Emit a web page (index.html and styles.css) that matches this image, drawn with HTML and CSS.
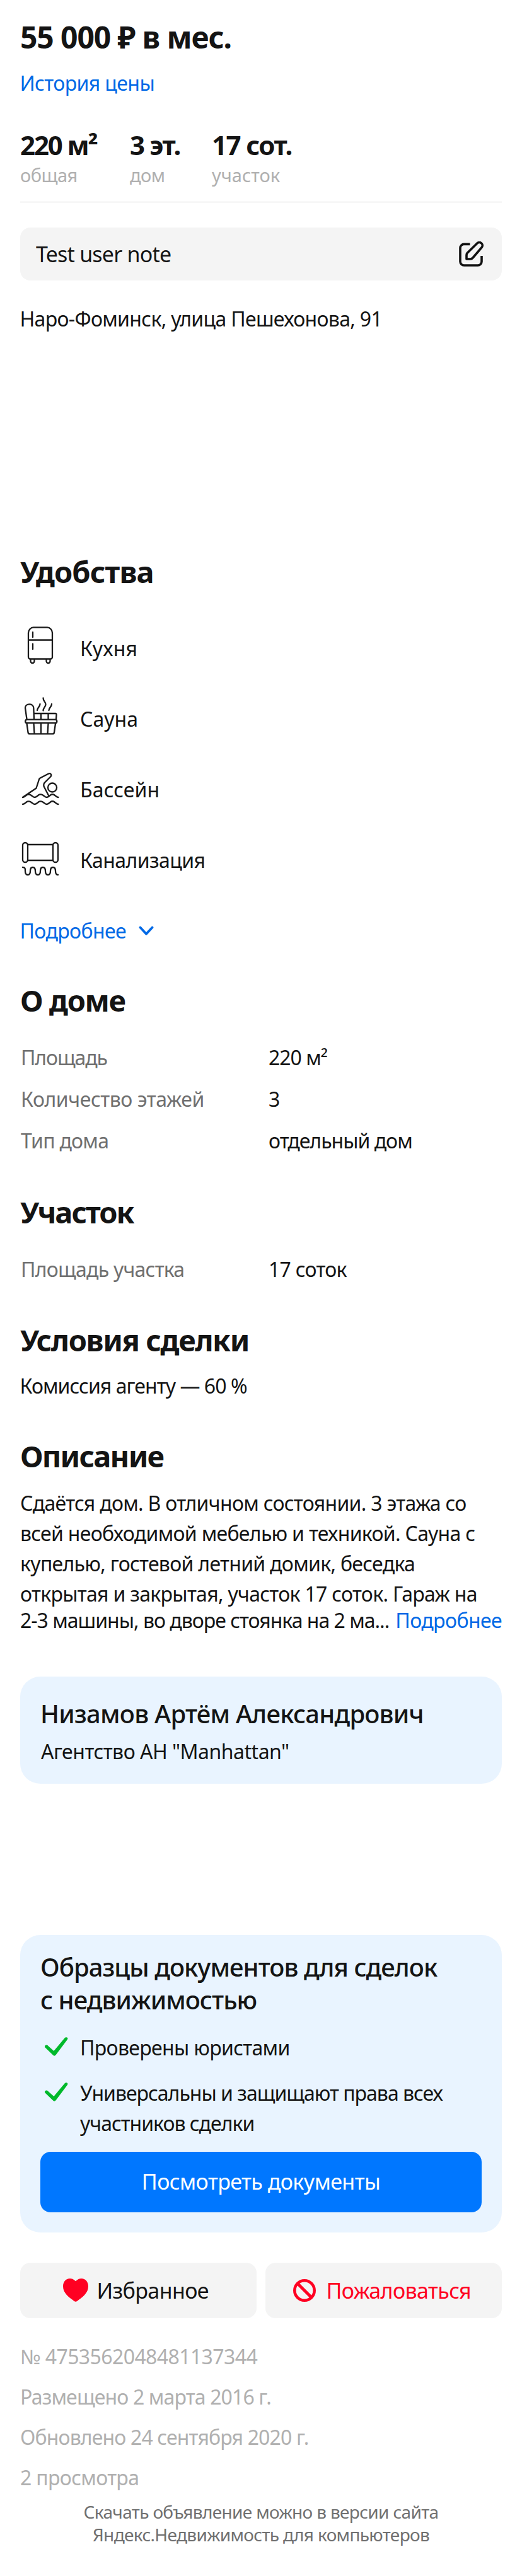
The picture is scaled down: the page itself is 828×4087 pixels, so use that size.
FILE: index.html
```html
<!DOCTYPE html>
<html lang="ru">
<head>
<meta charset="utf-8">
<title>Дом 220 м²</title>
<link rel="stylesheet" href="styles.css">
</head>
<body>
<main class="page">
  <h1 class="price">55 000 ₽ в мес.</h1>
  <a class="link history pull">История цены</a>

  <div class="stats">
    <div class="stat stat-area"><div class="stat-value t-area">220 м²</div><div class="stat-label">общая</div></div>
    <div class="stat stat-floors"><div class="stat-value t-floors">3 эт.</div><div class="stat-label">дом</div></div>
    <div class="stat"><div class="stat-value t-lot">17 сот.</div><div class="stat-label t-0">участок</div></div>
  </div>

  <div class="note">
    <span class="note-text">Test user note</span>
    <svg class="note-icon" viewBox="0 0 40 40" fill="none" stroke="#111" stroke-width="3.6" stroke-linejoin="round">
      <path d="M17.5 4.4H8a6 6 0 0 0-6 6V32a6 6 0 0 0 6 6h22a6 6 0 0 0 6-6v-9"/>
      <path d="M12 28v-6.5c0-1.2.5-2.4 1.3-3.3L28.6 3.3a4.9 4.9 0 0 1 7.8 5.9L22 26a5.5 5.5 0 0 1-4.2 2z"/>
    </svg>
  </div>
  <div class="address pull">Наро-Фоминск, улица Пешехонова, 91</div>

  <h2 class="title title-amenities t-89">Удобства</h2>
  <ul class="amenities">
    <li class="amenity">
      <svg class="amenity-icon" viewBox="0 0 64 64">
        <path d="M21 3.4h22c4 0 8 4 8 8.500V50.500a3 3 0 0 1-3 3H16a3 3 0 0 1-3-3V12c0-4.600 4-8.600 8-8.600zM13 23.500h38M20 11v8M20 29.500v8.500M16.500 54v3a3 3 0 0 0 6 0v-3M41.500 54v3a3 3 0 0 0 6 0v-3"/>
      </svg>
      <span class="t-13">Кухня</span>
    </li>
    <li class="amenity">
      <svg class="amenity-icon" viewBox="0 0 64 64">
        <path d="M10.500 37 8 19c0-7 12.500-8 13.300 0L22 37M22 28h34c1.300 0 1.600.8 1.500 2L57 37M33 28v9M44.500 28v9M11 37.600h44.500a2.800 2.800 0 0 1 0 5.600H11a2.800 2.800 0 0 1 0-5.600zM10.500 44l2 14c.2 1.600 1 2.400 2.500 2.400h36.500c1.500 0 2.300-.8 2.500-2.400l2-14M21.500 44l1 16M33 44v16M44.500 44l-1 16M27 23c0-4 4.500-5.500 4.500-10M45.500 23c0-4 4.500-5.500 4.500-10M36.500 3.500c0 5 4 6 4 10s-4 5.500-4 10"/>
      </svg>
      <span class="t-13">Сауна</span>
    </li>
    <li class="amenity">
      <svg class="amenity-icon" viewBox="0 0 64 64">
        <path d="M4 49 25.500 34.500 30 20.500c.3-1 .9-1.500 1.600-1.900L45 11.500c3-1.300 5.500 1.500 3.500 4.500L38.500 26c-1.500 2-1.500 5 0 7.500L45 46M4 49c2.500 0 4-2 6-3.500s4.500-1.500 7 0 3.500 3.500 6 3.500 4-2 6-3.500 4.500-1.500 7 0 3.500 3.500 6 3.500 4-2 6-3.500 4.500-1.500 6.500 0 3.500 3.500 6 3.500M4 60c2.500 0 4-2 6-3.500s4.500-1.500 7 0 3.500 3.500 6 3.500 4-2 6-3.500 4.500-1.500 7 0 3.500 3.500 6 3.500 4-2 6-3.500 4.500-1.500 6.500 0 3.500 3.500 6 3.500"/>
        <circle cx="51" cy="33.500" r="7"/>
      </svg>
      <span class="t-13">Бассейн</span>
    </li>
    <li class="amenity">
      <svg class="amenity-icon" viewBox="0 0 64 64">
        <rect x="4" y="9" width="8" height="31" rx="4"/>
        <rect x="52" y="9" width="8" height="31" rx="4"/>
        <path d="M12 12h40M12 37h40M4 48c4 0 4 2 4 6s1 6 4 6 4-2 4-6 1-6 4-6 4 2 4 6 1 6 4 6 4-2 4-6 1-6 4-6 4 2 4 6 1 6 4 6 4-2 4-6 1-6 4-6 4 2 4 6 1 6 4 6"/>
      </svg>
      <span>Канализация</span>
    </li>
  </ul>
  <a class="link more pull">Подробнее
    <svg class="chevron" viewBox="0 0 24 16" fill="none" stroke="#0069e6" stroke-width="3.800" stroke-linecap="round" stroke-linejoin="round"><path d="M2.500 2.500 12 12.700 21.500 2.500"/></svg>
  </a>

  <h2 class="title title-house t-134">О доме</h2>
  <dl class="facts">
    <dt class="t-111">Площадь</dt><dd>220 м²</dd>
    <dt class="t-43">Количество этажей</dt><dd>3</dd>
    <dt>Тип дома</dt><dd>отдельный дом</dd>
  </dl>

  <h2 class="title title-lot t-197">Участок</h2>
  <dl class="facts">
    <dt>Площадь участка</dt><dd class="t-73">17 соток</dd>
  </dl>

  <h2 class="title title-terms t-138">Условия сделки</h2>
  <div class="terms pull">Комиссия агенту — 60 %</div>

  <h2 class="title title-about t-176">Описание</h2>
  <p class="about">Сдаётся дом. В отличном состоянии. 3 этажа со<br>всей необходимой мебелью и техникой. Сауна с<br>купелью, гостевой летний домик, беседка<br>открытая и закрытая, участок 17 соток. Гараж на</p>
  <div class="about-last"><span class="t-97">2-3 машины, во дворе стоянка на 2 ма...</span><a class="link">Подробнее</a></div>

  <section class="card author">
    <div class="author-name">Низамов Артём Александрович</div>
    <div class="author-agency">Агентство АН "Manhattan"</div>
  </section>

  <section class="card docs">
    <h3 class="docs-title">Образцы документов для сделок<br>с недвижимостью</h3>
    <ul class="docs-list">
      <li class="docs-item">
        <svg class="check" viewBox="0 0 40 32"><path d="M1.500 14.600c2-2 4-1 5.500.8l8.400 7.600L32.500 2.500c2.500-2.800 6.500-.6 4.300 2.500L18.600 29.200c-1.600 2-3.300 1.900-4.800.1L1.800 17.800c-1-1.200-1.100-2.200-.3-3.200z"/></svg>
        <span class="t-67">Проверены юристами</span>
      </li>
      <li class="docs-item">
        <svg class="check" viewBox="0 0 40 32"><path d="M1.500 14.600c2-2 4-1 5.500.8l8.400 7.600L32.500 2.500c2.500-2.800 6.500-.6 4.300 2.500L18.600 29.200c-1.600 2-3.300 1.900-4.800.1L1.800 17.800c-1-1.200-1.100-2.200-.3-3.200z"/></svg>
        <span class="t-97">Универсальны и защищают права всех<br>участников сделки</span>
      </li>
    </ul>
    <button class="docs-button">Посмотреть документы</button>
  </section>

  <div class="actions">
    <button class="action favorite">
      <svg class="heart" viewBox="0 0 40 37"><path d="M20 4.300C23.500.8 26.500 0 29 0c6.500 0 11 5.200 11 12.500C40 23 31 29.500 22.500 35.700c-2 1.300-3 1.300-5 0C9 29.500 0 23 0 12.500 0 5.200 4.500 0 11 0c2.500 0 5.500.8 9 4.300z"/></svg>
      Избранное
    </button>
    <button class="action complain">
      <svg class="ban" viewBox="0 0 36 36" fill="none" stroke="#ff0022" stroke-width="4.600"><circle cx="18" cy="18" r="15.700"/><path d="m7 7 22 22"/></svg>
      Пожаловаться
    </button>
  </div>

  <div class="meta">
    <div class="t-60">№ 4753562048481137344</div>
    <div>Размещено 2 марта 2016 г.</div>
    <div>Обновлено 24 сентября 2020 г.</div>
    <div class="t-67">2 просмотра</div>
  </div>
  <footer class="footer">Скачать объявление можно в версии сайта<br>Яндекс.Недвижимость для компьютеров</footer>
</main>
</body>
</html>
```

FILE: styles.css
```css
* { box-sizing: border-box; }
body {
  margin: 0;
  background: #fff;
  color: #141414;
  font-family: "Noto Sans", sans-serif;
  font-size: 32px;
  line-height: 48px;
  letter-spacing: -.6px;
}
h1, h2, h3, p, ul, dl, dd { margin: 0; padding: 0; }
ul { list-style: none; }
button { border: 0; font: inherit; color: inherit; letter-spacing: inherit; white-space: nowrap; }
svg { display: block; flex: none; }
.page { display: flow-root; height: 4087px; padding: 31px 32px 0; white-space: nowrap; }
.link { color: #0069e6; }
.pull { margin-left: -.5px; }

/* tracking */
.t-0 { letter-spacing: 0 !important; }
.t-13 { letter-spacing: .12px; }
.t-43 { letter-spacing: -.43px; }
.t-60 { letter-spacing: -.6px; }
.t-67 { letter-spacing: -.67px; }
.t-73 { letter-spacing: -.73px; }
.t-97 { letter-spacing: -1px; }
.t-111 { letter-spacing: -1.11px; }
.t-area { letter-spacing: -2.1px; }
.t-floors { letter-spacing: -1.66px; }
.t-lot { letter-spacing: -1.56px; }
.title.t-89 { letter-spacing: -.89px; }
.title.t-134 { letter-spacing: -1.34px; }
.title.t-197 { letter-spacing: -1.97px; }
.title.t-138 { letter-spacing: -1.38px; }
.title.t-176 { letter-spacing: -1.76px; }

.price { font-size: 48px; line-height: 56px; font-weight: 700; letter-spacing: -1.1px; }
.history { display: block; margin-top: 25px; line-height: 40px; }

.stats { display: flex; margin-top: 54px; padding-bottom: 24px; border-bottom: 1px solid #d2d2d2; }
.stat-area { width: 174px; }
.stat-floors { width: 130px; }
.stat-value { font-size: 42px; font-weight: 700; }
.stat-label { margin-top: 6px; font-size: 29px; line-height: 36px; letter-spacing: -.55px; color: #b0b0b0; }

.note { display: flex; align-items: center; justify-content: space-between; height: 84px; margin-top: 40px; padding: 0 28px 0 25px; border-radius: 16px; background: #f4f4f4; }
.note-text { padding-bottom: 1px; font-size: 34px; letter-spacing: -.79px; }
.note-icon { width: 40px; height: 40px; }
.address { margin-top: 37px; letter-spacing: -.68px; }

.title { font-size: 47px; line-height: 56px; font-weight: 700; }
.title-amenities { margin-top: 349px; }
.title-house { margin-top: 58px; }
.title-lot { margin-top: 52px; }
.title-terms { margin-top: 51px; }
.title-about { margin-top: 59px; }

.amenities { margin-top: 38px; }
.amenity { display: flex; align-items: center; gap: 31px; height: 112px; }
.amenity-icon { width: 64px; height: 64px; margin-bottom: 10px; fill: none; stroke: #1a1a1a; stroke-width: 2.3; stroke-linecap: round; stroke-linejoin: round; }
.more { display: flex; align-items: center; gap: 20px; margin-top: 32px; }
.chevron { width: 24px; height: 16px; }

.facts { display: grid; grid-template-columns: 394px 1fr; margin-top: 30px; line-height: 66px; }
.facts dt { color: #707070; letter-spacing: -.75px; padding-left: 1px; }
.facts dt.t-111 { letter-spacing: -1.11px; }
.facts dt.t-43 { letter-spacing: -.43px; }
.facts dd { letter-spacing: -1px; }
.facts dd.t-73 { letter-spacing: -.73px; }

.terms { margin-top: 21px; letter-spacing: -.94px; }
.about { margin-top: 23px; letter-spacing: -.7px; }
.about-last { display: flex; justify-content: space-between; margin-top: -2px; line-height: 40px; }

.card { border-radius: 32px; background: #e9f4ff; }
.author { height: 170px; margin-top: 69px; padding: 35px 32px; }
.author-name { font-size: 40px; font-weight: 500; letter-spacing: -.75px; }
.author-agency { margin: 16px 0 0 1px; line-height: 40px; letter-spacing: -.5px; }

.docs { height: 472px; margin-top: 240px; padding: 25px 32px 0; }
.docs-title { font-size: 40px; line-height: 52px; font-weight: 500; letter-spacing: -.95px; }
.docs-list { display: grid; gap: 24px; margin-top: 26px; }
.docs-item { display: flex; gap: 17px; padding-left: 6px; }
.check { width: 40px; height: 32px; margin-top: 6px; fill: #00b92b; }
.docs-button { display: block; width: 100%; height: 96px; margin-top: 21px; padding: 0 0 2px; border-radius: 16px; background: #0077ff; color: #fff; font-size: 34px; letter-spacing: -.55px; }

.actions { display: grid; grid-template-columns: 1fr 1fr; gap: 14px; margin-top: 48px; }
.action { display: flex; align-items: center; height: 88px; padding: 0 0 1px; border-radius: 16px; background: #f4f4f4; font-size: 34px; letter-spacing: -.6px; }
.favorite { gap: 13.5px; padding-left: 68px; }
.complain { gap: 16.5px; padding-left: 44px; color: #ff0022; }
.heart { width: 40px; height: 37px; fill: #ff0022; }
.ban { width: 36px; height: 36px; }

.meta { margin-top: 29px; line-height: 64px; color: #b0b0b0; letter-spacing: -.86px; }
.footer { margin-top: 4px; font-size: 28px; line-height: 36px; letter-spacing: -.66px; text-align: center; color: #707070; }
```
